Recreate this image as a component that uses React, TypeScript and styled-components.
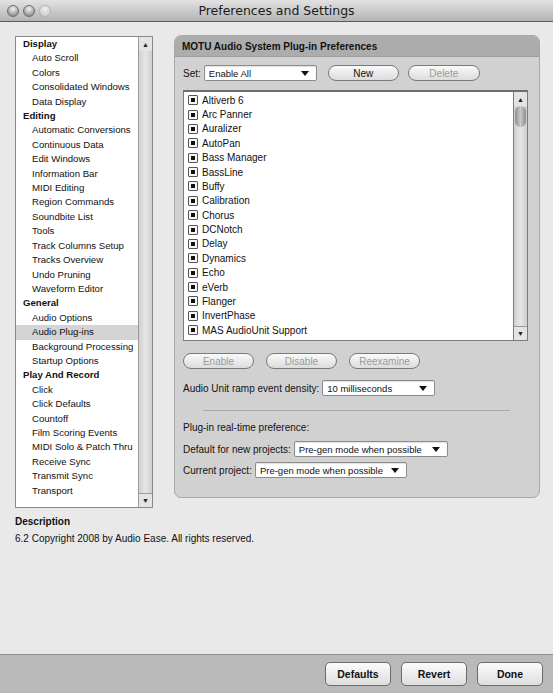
import styled, { createGlobalStyle } from "styled-components";

const GlobalStyle = createGlobalStyle`
    html, body {
        margin: 0;
        padding: 0;
        background: #e8e8e8;
    }
    * {
        box-sizing: border-box;
    }
`;

const Window = styled.div`
    width: 553px;
    height: 693px;
    display: flex;
    flex-direction: column;
    background: #e9e9e9;
    font-family: "Liberation Sans", Arial, sans-serif;
    font-size: 10px;
    color: #111;
    overflow: hidden;
`;

const TitleBar = styled.div`
    height: 22px;
    flex-shrink: 0;
    display: flex;
    align-items: center;
    position: relative;
    background: linear-gradient(#e2e2e2, #b4b4b4);
    border-bottom: 1px solid #5a5a5a;
`;

const Lights = styled.div`
    display: flex;
    gap: 4px;
    padding-left: 7px;
`;

const Light = styled.span<{ $dim?: boolean }>`
    width: 12px;
    height: 12px;
    border-radius: 50%;
    border: 1px solid ${(p) => (p.$dim ? "#b4b4b4" : "#6e6e6e")};
    background: ${(p) =>
        p.$dim
            ? "radial-gradient(circle at 50% 30%, #eeeeee, #c6c6c6)"
            : "radial-gradient(circle at 50% 30%, #f4f4f4, #9a9a9a 70%, #7e7e7e)"};
`;

const Title = styled.div`
    position: absolute;
    left: 0;
    right: 0;
    text-align: center;
    font-family: "DejaVu Sans", sans-serif;
    font-size: 12.5px;
    color: #1a1a1a;
    pointer-events: none;
`;

const Body = styled.div`
    flex: 1;
    display: flex;
    flex-direction: column;
    padding: 13px 13px 0 15px;
`;

const TopRow = styled.div`
    display: flex;
    align-items: flex-start;
    gap: 21px;
`;

const SideList = styled.div`
    width: 138px;
    height: 472px;
    margin-top: 1px;
    display: flex;
    background: #fff;
    border: 1px solid #8a8a8a;
`;

const SideItems = styled.div`
    flex: 1;
    overflow: hidden;
`;

const SideRow = styled.div<{ $head?: boolean; $selected?: boolean }>`
    height: 14.42px;
    line-height: 14.42px;
    padding-left: ${(p) => (p.$head ? "7px" : "16px")};
    font-weight: ${(p) => (p.$head ? "bold" : "normal")};
    background: ${(p) => (p.$selected ? "#d4d4d4" : "transparent")};
    white-space: nowrap;
    font-size: 9.6px;
`;

const ScrollBar = styled.div`
    width: 14px;
    flex-shrink: 0;
    display: flex;
    flex-direction: column;
    justify-content: space-between;
    background: linear-gradient(90deg, #d0d0d0, #e6e6e6 50%, #cfcfcf);
    border-left: 1px solid #9a9a9a;
`;

const Arrow = styled.div<{ $down?: boolean }>`
    height: 14px;
    display: flex;
    align-items: center;
    justify-content: center;
    background: #e4e4e4;
    border-top: ${(p) => (p.$down ? "1px solid #9a9a9a" : "none")};
    font-size: 7px;
    color: #222;
`;

const Thumb = styled.div`
    height: 21px;
    margin: 0 1px;
    border-radius: 6px;
    background: linear-gradient(90deg, #8e8e8e, #c8c8c8 50%, #8e8e8e);
`;

const Panel = styled.div`
    width: 366px;
    height: 463px;
    background: #d1d1d1;
    border: 1px solid #a8a8a8;
    border-radius: 7px;
    overflow: hidden;
    display: flex;
    flex-direction: column;
`;

const PanelHead = styled.div`
    height: 21px;
    line-height: 21px;
    padding-left: 7px;
    font-weight: bold;
    background: #acacac;
    border-bottom: 1px solid #9e9e9e;
`;

const PanelBody = styled.div`
    padding: 8px 11px 0 8px;
    display: flex;
    flex-direction: column;
`;

const Row = styled.div<{ $mt?: number }>`
    display: flex;
    align-items: center;
    gap: 3px;
    margin-top: ${(p) => p.$mt ?? 0}px;
    white-space: nowrap;
`;

const Gap = styled.span<{ $w: number }>`
    flex: 0 0 ${(p) => p.$w}px;
`;

const Select = styled.div<{ $w: number }>`
    width: ${(p) => p.$w}px;
    height: 16px;
    display: flex;
    align-items: center;
    justify-content: space-between;
    padding: 0 7px 0 4px;
    background: #fff;
    border: 1px solid #8c8c8c;
    border-radius: 2px;
    box-shadow: inset 0 1px 1px rgba(0, 0, 0, 0.12);
    font-size: 9.5px;
    overflow: hidden;
`;

const Caret = styled.span`
    flex-shrink: 0;
    width: 0;
    height: 0;
    border-left: 4px solid transparent;
    border-right: 4px solid transparent;
    border-top: 5px solid #111;
`;

const Pill = styled.div<{ $disabled?: boolean; $w?: number }>`
    width: ${(p) => p.$w ?? 71}px;
    height: 16px;
    display: flex;
    align-items: center;
    justify-content: center;
    border-radius: 8px;
    border: 1px solid #7a7a7a;
    background: linear-gradient(#fafafa, #dcdcdc);
    color: ${(p) => (p.$disabled ? "#9a9a9a" : "#111")};
`;

const ButtonRow = styled.div`
    display: flex;
    gap: 12px;
    margin-top: 12px;
`;

const PluginBox = styled.div`
    margin-top: 9px;
    width: 345px;
    height: 251px;
    display: flex;
    background: #fff;
    border: 1px solid #7c7c7c;
    border-top: 2px solid #6e6e6e;
`;

const PluginItems = styled.div`
    flex: 1;
    padding-top: 1px;
    overflow: hidden;
`;

const PluginRow = styled.div`
    height: 14.38px;
    display: flex;
    align-items: center;
    gap: 4px;
    padding-left: 4px;
    white-space: nowrap;
`;

const Check = styled.span`
    width: 10px;
    height: 10px;
    display: flex;
    align-items: center;
    justify-content: center;
    border: 1px solid #555;
    border-radius: 1px;
    background: #f6f6f6;

    &::after {
        content: "";
        width: 4px;
        height: 4px;
        background: #111;
    }
`;

const PluginScroll = styled(ScrollBar)`
    border-left: 1px solid #7c7c7c;
    justify-content: flex-start;
`;

const Spacer = styled.div`
    flex: 1;
`;

const Divider = styled.div`
    height: 1px;
    margin: 14px 18px 0 20px;
    background: #aaa;
`;

const DescTitle = styled.div`
    margin-top: 8px;
    font-weight: bold;
`;

const DescText = styled.div`
    margin-top: 6px;
`;

const Footer = styled.div`
    height: 39px;
    flex-shrink: 0;
    display: flex;
    align-items: center;
    justify-content: flex-end;
    gap: 10px;
    padding-right: 10px;
    background: #b9b9b9;
    border-top: 1px solid #8f8f8f;
`;

const FooterButton = styled.div`
    width: 66px;
    height: 24px;
    display: flex;
    align-items: center;
    justify-content: center;
    border: 1px solid #6c6c6c;
    border-radius: 5px;
    background: linear-gradient(#fbfbfb, #dedede);
    font-weight: bold;
    font-size: 10.5px;
`;

const sideItems: { label: string; head?: boolean; selected?: boolean }[] = [
    { label: "Display", head: true },
    { label: "Auto Scroll" },
    { label: "Colors" },
    { label: "Consolidated Windows" },
    { label: "Data Display" },
    { label: "Editing", head: true },
    { label: "Automatic Conversions" },
    { label: "Continuous Data" },
    { label: "Edit Windows" },
    { label: "Information Bar" },
    { label: "MIDI Editing" },
    { label: "Region Commands" },
    { label: "Soundbite List" },
    { label: "Tools" },
    { label: "Track Columns Setup" },
    { label: "Tracks Overview" },
    { label: "Undo Pruning" },
    { label: "Waveform Editor" },
    { label: "General", head: true },
    { label: "Audio Options" },
    { label: "Audio Plug-ins", selected: true },
    { label: "Background Processing" },
    { label: "Startup Options" },
    { label: "Play And Record", head: true },
    { label: "Click" },
    { label: "Click Defaults" },
    { label: "Countoff" },
    { label: "Film Scoring Events" },
    { label: "MIDI Solo & Patch Thru" },
    { label: "Receive Sync" },
    { label: "Transmit Sync" },
    { label: "Transport" },
];

const plugins = [
    "Altiverb 6",
    "Arc Panner",
    "Auralizer",
    "AutoPan",
    "Bass Manager",
    "BassLine",
    "Buffy",
    "Calibration",
    "Chorus",
    "DCNotch",
    "Delay",
    "Dynamics",
    "Echo",
    "eVerb",
    "Flanger",
    "InvertPhase",
    "MAS AudioUnit Support",
];

export default function App() {
    return (
        <Window>
            <GlobalStyle />
            <TitleBar>
                <Lights>
                    <Light />
                    <Light />
                    <Light $dim />
                </Lights>
                <Title>Preferences and Settings</Title>
            </TitleBar>
            <Body>
                <TopRow>
                    <SideList>
                        <SideItems>
                            {sideItems.map((it) => (
                                <SideRow
                                    key={it.label}
                                    $head={it.head}
                                    $selected={it.selected}
                                >
                                    {it.label}
                                </SideRow>
                            ))}
                        </SideItems>
                        <ScrollBar>
                            <Arrow>▲</Arrow>
                            <Arrow $down>▼</Arrow>
                        </ScrollBar>
                    </SideList>
                    <Panel>
                        <PanelHead>MOTU Audio System Plug-in Preferences</PanelHead>
                        <PanelBody>
                            <Row>
                                Set:
                                <Select $w={113}>
                                    Enable All
                                    <Caret />
                                </Select>
                                <Gap $w={5} />
                                <Pill>New</Pill>
                                <Gap $w={3} />
                                <Pill $disabled $w={72}>
                                    Delete
                                </Pill>
                            </Row>
                            <PluginBox>
                                <PluginItems>
                                    {plugins.map((p) => (
                                        <PluginRow key={p}>
                                            <Check />
                                            {p}
                                        </PluginRow>
                                    ))}
                                    <PluginRow>
                                        <Check />
                                    </PluginRow>
                                </PluginItems>
                                <PluginScroll>
                                    <Arrow>▲</Arrow>
                                    <Thumb />
                                    <Spacer />
                                    <Arrow $down>▼</Arrow>
                                </PluginScroll>
                            </PluginBox>
                            <ButtonRow>
                                <Pill $disabled>Enable</Pill>
                                <Pill $disabled>Disable</Pill>
                                <Pill $disabled>Reexamine</Pill>
                            </ButtonRow>
                            <Row $mt={11}>
                                Audio Unit ramp event density:
                                <Select $w={113}>
                                    10 milliseconds
                                    <Caret />
                                </Select>
                            </Row>
                            <Divider />
                            <Row $mt={11}>Plug-in real-time preference:</Row>
                            <Row $mt={8}>
                                Default for new projects:
                                <Select $w={154}>
                                    Pre-gen mode when possible
                                    <Caret />
                                </Select>
                            </Row>
                            <Row $mt={5}>
                                Current project:
                                <Select $w={152}>
                                    Pre-gen mode when possible
                                    <Caret />
                                </Select>
                            </Row>
                        </PanelBody>
                    </Panel>
                </TopRow>
                <DescTitle>Description</DescTitle>
                <DescText>6.2 Copyright 2008 by Audio Ease. All rights reserved.</DescText>
            </Body>
            <Footer>
                <FooterButton>Defaults</FooterButton>
                <FooterButton>Revert</FooterButton>
                <FooterButton>Done</FooterButton>
            </Footer>
        </Window>
    );
}
